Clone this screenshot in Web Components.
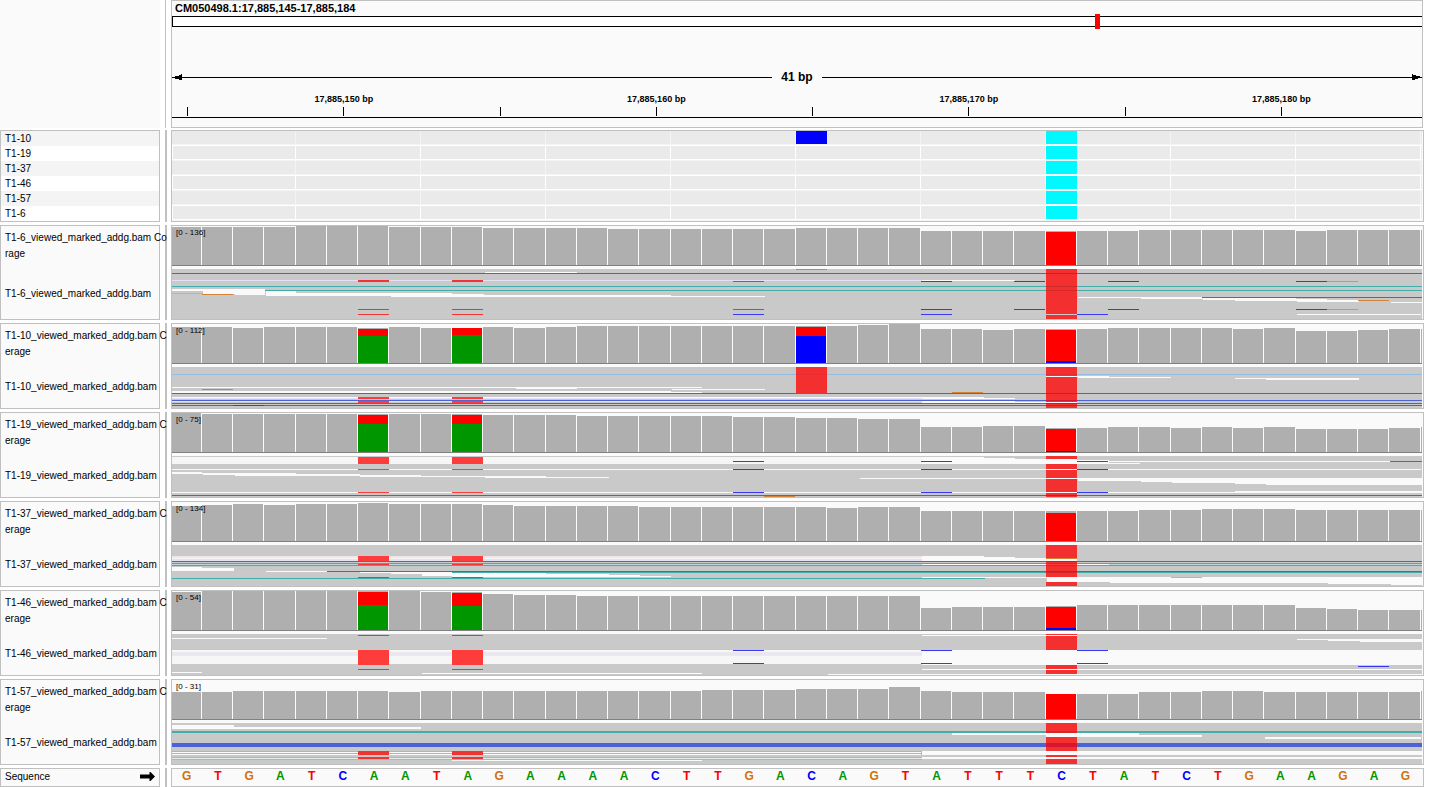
<!DOCTYPE html>
<html lang="en">
<head>
<meta charset="utf-8">
<title>Genome viewer</title>
<style>
  body { margin: 0; background: #fff; color: #000; font: 10px/15px "Liberation Sans", Arial, sans-serif; }
</style>
</head>
<body>
<genome-viewer></genome-viewer>

<script>
const BINS = 40;
const LEFT = 172;      /* first drawn x of the shared locus axis */
const WIDTH = 1250;    /* units across the visible locus */
const binX = k => Math.floor(171 + k * 31.25);
const PAPER = '#fafafa';

const rect = (x1, x2, y, h, fill) =>
  `<rect x="${x1}" y="${y}" width="${x2 - x1}" height="${h}" fill="${fill}"/>`;
const plot = (height, body) =>
  `<svg viewBox="${LEFT} 0 ${WIDTH} ${height}" height="${height}" preserveAspectRatio="none" shape-rendering="crispEdges" aria-hidden="true">${body}</svg>`;

/* Palette of the alignment marks */
const INK = {
  W: PAPER, F: '#f6f6f6', B: '#4b62d8', T: '#43adab', O: '#d0843a', U: '#3838f2',
  G: '#43e04a', P: '#e2e2f4', L: '#96bce2', D: '#b4b4b4', K: '#f2e6ea', E: '#e4ede8', V: '#e4e8f0',
  Y: '#bcd8d8', R: '#ff3c3c', Q: '#f03434', C: 'rgba(255,0,0,.77)'
};
const END = 1422;

/* Coverage: top of each bin; stacks: bin -> [from, to, colour]
   Reads: "x1 x2 y h ink" */
const TRACKS = [
  { name: 'T1-6', first: 'Co', rest: 'rage', max: 136, height: 50,
    tops: [1,1,1,1,0,0,0,1,1,1,2,2,2,2,3,3,3,3,3,3,2,2,2,2,5,5,5,5,5,5,5,4,4,4,4,4,5,4,4,4,4],
    stacks: { 28: [[6,39,'#f00']] },
    reads: `485 577 3 1 W;172 1422 4 1 B;172 922 11 1 P;922 1015 11 1 W;172 1422 17 1 T;265 1422 21 1 T;
      172 203 20 2 W;172 203 24 1 D;203 235 20 5 W;202 233 25 1 O;235 265 20 6 W;266 296 22 5 W;296 391 24 3 W;
      391 452 24 4 W;452 484 25 3 W;484 671 26 2 W;671 765 27 1 W;1078 1202 28 1 W;1202 1422 28 1 B;
      1141 1296 29 1 W;1203 1327 30 1 W;1235 1359 31 1 W;1358 1389 31 1 O;1297 1359 32 1 W;1391 1422 33 1 W;
      796 827 0 1 O;358 389 11 2 Q;452 483 11 2 Q;733 764 12 1 Q;921 952 12 1 U;1014 1045 12 1 U;1108 1139 12 1 U;
      1296 1327 12 1 U;1327 1358 12 1 G;358 389 40 1 Q;452 483 40 1 Q;733 764 40 1 Q;921 952 40 1 U;1014 1045 40 1 U;
      1108 1139 40 1 U;1296 1327 40 1 U;1327 1358 40 1 G;358 389 45 1 Q;452 483 45 1 Q;733 764 45 1 U;921 952 45 1 U;
      1077 1108 45 1 U;1297 1421 45 1 W;1046 1077 0 45 C;1046 1077 46 4 C` },
  { name: 'T1-10', first: 'C', rest: 'erage', max: 112, height: 41,
    tops: [3,3,4,3,3,3,4,3,4,4,3,4,3,2,2,2,2,2,2,2,2,2,1,0,5,5,6,5,5,5,4,4,4,4,5,4,7,7,6,5,5],
    stacks: { 6: [[5,12,'#f00'],[12,39,'#009600']], 9: [[4,11,'#f00'],[11,39,'#009600']],
              20: [[3,12,'#f00'],[12,39,'#00f']], 28: [[6,37,'#f00'],[37,39,'#00f']] },
    reads: `172 1422 7 1 L;172 702 20 1 W;516 577 21 1 W;672 765 22 1 W;202 233 22 1 O;172 671 24 2 W;671 702 25 1 W;
      172 1422 26 1 B;172 984 30 1 W;172 922 31 1 P;922 1015 31 1 W;172 1422 33 1 B;172 922 34 1 P;922 1015 34 1 W;
      922 1077 35 1 W;172 1422 36 1 B;172 1422 38 1 B;233 264 38 1 U;358 389 30 2 R;452 483 30 2 R;358 389 34 2 R;
      452 483 34 2 R;952 983 25 1 O;796 827 0 26 C;1046 1077 0 9 C;1046 1109 9 1 W;1078 1171 10 1 W;1235 1359 11 1 W;
      1266 1359 12 1 W;1046 1077 10 25 C;1046 1077 36 5 C` },
  { name: 'T1-19', first: 'C', rest: 'erage', max: 75, height: 41,
    tops: [0,1,1,1,1,1,1,1,1,1,2,2,2,3,3,3,3,3,4,4,5,5,6,6,14,14,13,13,15,15,14,14,15,14,15,14,16,16,16,15,14],
    stacks: { 6: [[2,11,'#f00'],[11,39,'#009600']], 9: [[2,11,'#f00'],[11,39,'#009600']], 28: [[16,38,'#f00'],[38,39,'#00f']] },
    reads: `172 922 1 7 F;922 984 1 7 W;984 1015 2 6 W;1015 1077 3 5 W;1077 1109 4 4 W;1109 1390 5 1 W;1109 1140 7 1 W;
      1390 1422 5 1 B;733 764 5 1 U;921 952 5 1 U;1077 1108 5 1 U;358 389 1 7 R;452 483 1 7 R;172 1421 13 1 W;
      358 389 13 1 R;452 483 13 1 R;733 764 13 1 U;921 952 13 1 U;1077 1108 13 1 U;172 202 16 2 W;202 296 17 1 W;
      203 360 18 1 W;235 421 19 1 W;360 546 20 1 W;485 609 21 1 W;860 1422 22 1 W;1078 1422 23 2 W;1141 1422 25 1 W;
      1172 1422 26 1 W;1235 1422 27 1 W;1266 1422 28 1 W;1235 1422 35 1 W;172 1422 36 1 W;358 389 36 1 R;452 483 36 1 R;
      733 764 36 1 U;921 952 36 1 U;1077 1108 36 1 U;172 1422 39 1 B;764 795 40 1 O;1046 1077 0 3 C;1046 1077 8 5 C;
      1046 1077 14 8 C;1046 1077 23 13 C;1046 1077 37 4 C` },
  { name: 'T1-37', first: 'C', rest: 'erage', max: 134, height: 41,
    tops: [4,3,2,3,2,2,1,2,2,2,3,4,4,4,4,5,5,5,5,5,5,6,5,5,9,9,9,9,9,9,9,8,8,7,7,7,8,8,8,8,8],
    stacks: { 28: [[11,39,'#f00']] },
    reads: `172 922 11 2 K;172 922 13 1 F;172 922 14 2 P;922 984 11 5 W;984 1015 12 4 W;1015 1077 13 3 W;1046 1077 13 1 O;
      172 1422 16 1 B;172 1422 18 1 T;172 922 19 1 Y;922 1109 19 1 W;1109 1422 19 1 Y;172 1422 20 1 T;358 389 11 5 R;
      452 483 11 5 R;358 389 19 1 Q;452 483 19 1 Q;172 202 22 4 W;202 234 23 3 W;266 327 26 1 W;327 1422 26 1 B;
      452 1422 27 1 T;360 452 27 1 W;391 422 28 1 W;422 452 28 3 W;452 546 28 4 W;546 609 29 3 W;609 640 30 2 W;
      640 671 31 1 W;358 389 32 1 Q;452 483 32 1 Q;172 985 33 1 T;922 1422 32 1 W;1171 1202 32 1 D;1047 1110 33 4 W;
      1110 1328 33 5 W;1328 1391 33 6 W;1391 1422 33 7 W;1046 1077 0 13 C;1046 1077 16 16 C;1046 1077 37 4 C` },
  { name: 'T1-46', first: 'C', rest: 'erage', max: 54, height: 41,
    tops: [1,0,0,0,0,0,0,0,1,1,3,4,4,5,5,5,5,5,5,5,5,5,5,5,17,16,16,16,15,14,14,14,14,14,14,14,17,18,19,19,19],
    stacks: { 6: [[1,14,'#f00'],[14,39,'#009600']], 9: [[2,15,'#f00'],[15,39,'#009600']], 28: [[16,37,'#f00'],[37,39,'#00f']] },
    reads: `358 389 1 1 Q;452 483 1 1 Q;172 327 4 1 W;922 1077 1 1 W;172 922 16 14 F;172 922 18 1 K;172 922 19 2 V;172 922 21 1 E;
      922 1422 16 15 W;733 764 16 1 U;921 952 16 1 U;1077 1108 16 1 U;733 764 29 1 U;921 952 29 1 U;1077 1108 29 1 U;
      358 389 16 15 R;452 483 16 15 R;358 389 35 1 Q;452 483 35 1 Q;922 1422 35 1 W;172 202 38 1 W;422 702 39 1 W;
      828 1422 40 1 W;1297 1422 5 1 W;1328 1422 6 1 W;1360 1422 7 1 W;1358 1389 32 1 U;1046 1077 0 1 C;1046 1077 2 14 C;
      1046 1077 31 4 C;1046 1077 36 4 C` },
  { name: 'T1-57', first: 'C', rest: 'erage', max: 31, height: 41,
    tops: [12,12,11,11,11,11,11,12,11,11,11,11,11,11,11,11,11,10,10,10,9,9,9,7,11,12,12,12,14,14,14,12,12,11,11,12,12,12,12,12,11],
    stacks: { 28: [[14,39,'#f00']] },
    reads: `172 234 2 4 W;234 421 4 2 W;172 1422 8 2 T;952 1139 10 2 W;1046 1202 12 2 W;1265 1421 14 2 W;172 1422 20 4 B;
      172 922 28 1 D;172 922 29 1 W;172 922 30 1 D;172 922 31 1 W;922 1422 28 4 W;172 922 34 1 D;172 922 35 1 E;
      172 922 36 1 D;922 1422 34 2 W;452 702 37 1 W;921 922 28 4 D;358 389 28 4 Q;452 483 28 4 Q;358 389 34 2 Q;
      452 483 34 2 Q;1046 1077 0 10 C;1046 1077 14 14 C;1046 1077 32 2 C;1046 1077 36 5 C` }
];

/* One horizontal band: name panel, splitter, data panel */
customElements.define('track-row', class extends HTMLElement {
  constructor() {
    super();
    this.attachShadow({ mode: 'open' }).innerHTML = `
      <style>
        :host { display: grid; grid-template-columns: 160px 11px minmax(0, 1fr); }
        .name, .data { box-sizing: border-box; border: 1px solid #c0c0c0; background: ${PAPER}; min-width: 0; }
        /* long names run over the splitter and end under the data panel */
        .name { display: flex; flex-direction: column; z-index: 1; }
        .split { margin-left: 5px; width: 2px; background: #c0c0c0; }
        .data { padding-right: 1px; z-index: 2; }
        :host([plain]) .name { border: 0; }
        :host([plain]) .split { width: 1px; }
        :host([plain]) .data { margin-right: 1px; padding: 0; }
      </style>
      <div class="name"><slot name="name"></slot></div>
      <div class="split"></div>
      <div class="data"><slot></slot></div>`;
  }
});

customElements.define('locus-ruler', class extends HTMLElement {
  constructor() {
    super();
    const labels = ['', '17,885,150 bp', '', '17,885,160 bp', '', '17,885,170 bp', '', '17,885,180 bp'];
    this.attachShadow({ mode: 'open' }).innerHTML = `
      <style>
        :host { display: flex; flex-direction: column; height: 126px; overflow: hidden; font-weight: bold; }
        h1 { margin: 0; padding-left: 3px; font-size: 11px; line-height: 15px; }
        .ideogram { position: relative; box-sizing: border-box; height: 11px; border: 1px solid #000; border-right: 0; background: #fff; }
        .here { position: absolute; left: 73.8%; top: -3px; width: 5px; height: 15px; background: #f00; }
        .span { display: flex; align-items: center; margin-top: 42px; height: 17px; font-size: 12px; }
        .line { flex: 1; height: 1px; background: #000; }
        .span b { width: 50px; text-align: center; }
        .span svg { width: 10px; height: 7px; }
        .ticks { display: grid; grid-template-columns: repeat(8, 1fr); margin: 5px 5% 0 -5%; font-size: 9px; line-height: 16px; text-align: center; }
        .ticks div { display: flex; flex-direction: column; align-items: center; justify-content: flex-end; height: 25px; }
        .ticks div::after { content: ""; width: 1px; height: 9px; background: #000; }
        .axis { margin-top: 1px; border-top: 1px solid #000; }
      </style>
      <h1>CM050498.1:17,885,145-17,885,184</h1>
      <div class="ideogram"><div class="here"></div></div>
      <div class="span">
        <svg viewBox="0 0 10 7" shape-rendering="crispEdges" aria-hidden="true"><path d="M0 3h3V2h4V1h2V0h1v6H7V5H3V4H0z"/></svg>
        <div class="line"></div><b>41 bp</b><div class="line"></div>
        <svg viewBox="0 0 10 7" shape-rendering="crispEdges" aria-hidden="true"><path d="M10 3H8V2H4V1H1V0H0v6h3V5h3V4h4z"/></svg>
      </div>
      <div class="ticks">${labels.map(t => `<div>${t ? `<span>${t}</span>` : ''}</div>`).join('')}</div>
      <div class="axis"></div>`;
  }
});

customElements.define('variant-names', class extends HTMLElement {
  constructor() {
    super();
    this.attachShadow({ mode: 'open' }).innerHTML = `
      <style>
        :host { display: block; }
        ul { list-style: none; margin: 0; padding: 0; }
        li { height: 15px; line-height: 16px; padding-left: 4px; background: #fff; }
        li:nth-child(odd) { background: #f4f4f4; }
      </style>
      <ul>${['T1-10', 'T1-19', 'T1-37', 'T1-46', 'T1-57', 'T1-6'].map(n => `<li>${n}</li>`).join('')}</ul>`;
  }
});

customElements.define('variant-grid', class extends HTMLElement {
  constructor() {
    super();
    let body = rect(LEFT, END, 0, 90, '#f4f4f4');
    for (let r = 0; r < 6; r++) {
      const y = r * 15, odd = r % 2 === 1;
      const seam = odd ? '#fff' : '#f4f4f4';
      if (odd) body += rect(LEFT, END, y - 1, 15, '#fff');
      body += rect(odd ? 173 : LEFT, END, y, 13, '#eaeaea');
      for (let x = 295; x < END; x += 125) body += rect(x, x + 1, y, 13, seam);
      if (r === 0) body += rect(binX(20), binX(21), y, 13, '#00f');
      body += rect(1046, 1077, y, 13, '#00f8ff');
    }
    this.attachShadow({ mode: 'open' }).innerHTML =
      `<style>:host, svg { display: block; width: 100%; }</style>${plot(90, body)}`;
  }
});

customElements.define('track-label', class extends HTMLElement {
  set track(t) {
    this.attachShadow({ mode: 'open' }).innerHTML = `
      <style>
        :host { display: flex; flex-direction: column; flex: 1; gap: 3px; margin-right: -12px; padding-left: 4px;
                white-space: nowrap; line-height: 16px; }
        .coverage { display: flex; flex-direction: column; justify-content: center; height: 40px; }
        .reads { display: flex; flex: 1; align-items: center; padding-bottom: 1px; }
      </style>
      <div class="coverage"><span>${t.name}_viewed_marked_addg.bam ${t.first}</span><span>${t.rest}</span></div>
      <div class="reads">${t.name}_viewed_marked_addg.bam</div>`;
  }
});

customElements.define('coverage-plot', class extends HTMLElement {
  set track(t) {
    let body = '';
    t.tops.forEach((top, k) => {
      const x1 = Math.max(LEFT, binX(k));
      const x2 = k === BINS ? END : binX(k + 1) - 1;
      body += rect(x1, x2, top, 39 - top, '#afafaf');
      for (const [a, b, fill] of t.stacks[k] || []) body += rect(x1, x2, a, b - a, fill);
    });
    body += rect(LEFT, END, 39, 1, '#808080');
    this.attachShadow({ mode: 'open' }).innerHTML = `
      <style>
        :host { display: block; position: relative; }
        svg { display: block; width: 100%; }
        .range { position: absolute; left: 4px; top: 1px; font-size: 8px; line-height: 12px; }
      </style>
      ${plot(40, body)}<span class="range">[0 - ${t.max}]</span>`;
  }
});

customElements.define('alignment-plot', class extends HTMLElement {
  set track(t) {
    const body = rect(LEFT, END, 0, t.height, '#c9c9c9') + t.reads.split(';').map(s => {
      const [x1, x2, y, h, ink] = s.trim().split(' ');
      return rect(+x1, +x2, +y, +h, INK[ink]);
    }).join('');
    this.attachShadow({ mode: 'open' }).innerHTML = `
      <style>:host { display: block; padding-top: 3px; } svg { display: block; width: 100%; }</style>
      ${plot(t.height, body)}`;
  }
});

customElements.define('strand-label', class extends HTMLElement {
  constructor() {
    super();
    this.attachShadow({ mode: 'open' }).innerHTML = `
      <style>
        :host { display: flex; justify-content: space-between; align-items: center; height: 14px; padding: 0 4px 3px; }
        button { display: block; border: 0; padding: 0; background: none; }
        svg { display: block; }
      </style>
      <span>Sequence</span>
      <button aria-label="Flip strand"><svg width="15" height="9" viewBox="0 0 30 18"><path d="M0 5h19V0h2l9 9-9 9h-2v-5H0z"/></svg></button>`;
  }
});

customElements.define('base-sequence', class extends HTMLElement {
  constructor() {
    super();
    const bases = 'GTGATCAATAGAAAACTTGACAGTATTTCTATCTGAAGAG';
    this.attachShadow({ mode: 'open' }).innerHTML = `
      <style>
        :host { display: grid; grid-template-columns: repeat(${BINS}, minmax(0, 1fr)); height: 17px; margin: 0 1px 0 -1px;
                font-size: 12px; font-weight: bold; line-height: 15px; text-align: center; }
        .G { color: #d17105; } .A { color: #009600; } .T { color: #f00; } .C { color: #00f; }
      </style>
      ${[...bases].map(b => `<span class="${b}">${b}</span>`).join('')}`;
  }
});

customElements.define('genome-viewer', class extends HTMLElement {
  constructor() {
    super();
    const root = this.attachShadow({ mode: 'open' });
    root.innerHTML = `
      <style>
        :host { display: block; padding-right: 16px; }
        main { display: flex; flex-direction: column; gap: 3px; }
        .top { display: flex; flex-direction: column; gap: 2px; }
      </style>
      <main>
        <div class="top">
          <track-row plain><locus-ruler></locus-ruler></track-row>
          <track-row><variant-names slot="name"></variant-names><variant-grid></variant-grid></track-row>
        </div>
        ${TRACKS.map(() => `<track-row class="bam"><track-label slot="name"></track-label><coverage-plot></coverage-plot><alignment-plot></alignment-plot></track-row>`).join('')}
        <track-row><strand-label slot="name"></strand-label><base-sequence></base-sequence></track-row>
      </main>`;
    root.querySelectorAll('.bam').forEach((row, i) => {
      for (const part of row.children) part.track = TRACKS[i];
    });
  }
});
</script>
</body>
</html>
